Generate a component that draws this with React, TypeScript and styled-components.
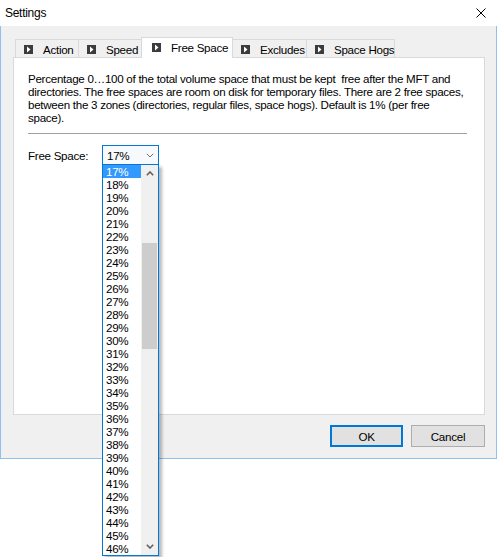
import React from 'react';
import styled, { createGlobalStyle } from 'styled-components';

const FONT = `"Liberation Sans", Arial, sans-serif`;
const FS = '11.6px';
const LS = '-0.28px';

const Global = createGlobalStyle`
  html, body { margin: 0; padding: 0; background: #ffffff; }
  html, body, #root { min-height: 557px; overflow: visible; }
  body { font-family: ${FONT}; font-size: ${FS}; letter-spacing: ${LS}; color: #000; }
`;

const Window = styled.div`
  position: relative;
  width: 497px;
  font-family: ${FONT};
  font-size: ${FS};
  letter-spacing: ${LS};
  color: #000;
`;

const TitleBar = styled.div`
  height: 26px;
  box-sizing: border-box;
  background: #ffffff;
  display: flex;
  align-items: center;
  justify-content: space-between;
  padding: 0 11px 0 5px;
`;

const Title = styled.span`
  font-size: 12px;
`;

const Client = styled.div`
  background: #f0f0f0;
  border: 1px solid #8dc1f2;
  border-top: none;
  padding: 11px 11px 11px 12px;
  display: flex;
  flex-direction: column;
`;

const TabStrip = styled.div`
  display: flex;
  align-items: flex-end;
  height: 20px;
  padding-left: 2px;
`;

const Tab = styled.div<{ $w: number; $active?: boolean }>`
  box-sizing: border-box;
  flex: none;
  width: ${(p) => p.$w}px;
  height: ${(p) => (p.$active ? 21 : 18)}px;
  margin-bottom: ${(p) => (p.$active ? -1 : 0)}px;
  margin-left: -1px;
  &:first-child { margin-left: 0; }
  position: relative;
  z-index: ${(p) => (p.$active ? 2 : 1)};
  background: ${(p) => (p.$active ? '#ffffff' : '#f0f0f0')};
  border: 1px solid #d9d9d9;
  border-bottom: none;
  display: flex;
  align-items: center;
  gap: 10px;
  padding-left: ${(p) => (p.$active ? 10 : 8)}px;
  padding-top: ${(p) => (p.$active ? 0 : 1)}px;
  padding-bottom: ${(p) => (p.$active ? 2 : 0)}px;
  white-space: nowrap;
  & > svg { flex: none; }
`;

const Panel = styled.div`
  box-sizing: border-box;
  height: 358px;
  background: #ffffff;
  border: 1px solid #d9d9d9;
  padding: 14px 17px 0 14px;
  display: flex;
  flex-direction: column;
`;

const Description = styled.div`
  line-height: 13px;
`;

const Line = styled.div`
  white-space: nowrap;
`;

const Separator = styled.div`
  height: 1px;
  background: #a0a0a0;
  margin-top: 9px;
`;

const FieldRow = styled.div`
  display: flex;
  align-items: center;
  margin-top: 11px;
  height: 20px;
`;

const FieldLabel = styled.span`
  width: 74px;
`;

const ComboWrap = styled.div`
  position: relative;
  width: 57px;
  height: 20px;
`;

const Combo = styled.div`
  box-sizing: border-box;
  width: 100%;
  height: 100%;
  border: 1px solid #0078d7;
  background: #f7fafd;
  display: flex;
  align-items: center;
  justify-content: space-between;
  padding: 0 4px 0 4px;
`;

const DropList = styled.div`
  position: absolute;
  left: 0;
  top: 19px;
  width: 57px;
  height: 392px;
  box-sizing: border-box;
  border: 1px solid #0078d7;
  background: #ffffff;
  display: flex;
  box-shadow: 3px 3px 3px rgba(0, 0, 0, 0.28);
  z-index: 10;
`;

const Items = styled.div`
  flex: 1;
  display: flex;
  flex-direction: column;
`;

const Item = styled.div<{ $sel?: boolean }>`
  flex: none;
  height: 13px;
  line-height: 13px;
  padding-left: 3px;
  background: ${(p) => (p.$sel ? '#3399ff' : 'transparent')};
  color: ${(p) => (p.$sel ? '#ffffff' : '#000000')};
`;

const ScrollBar = styled.div`
  width: 17px;
  background: #f0f0f0;
  display: flex;
  flex-direction: column;
  align-items: center;
`;

const ScrollArrow = styled.div`
  flex: none;
  height: 17px;
  width: 17px;
  display: flex;
  align-items: center;
  justify-content: center;
`;

const Track = styled.div`
  flex: 1;
  width: 100%;
  display: flex;
  flex-direction: column;
  align-items: center;
`;

const Thumb = styled.div`
  width: 15px;
  height: 106px;
  margin-top: 61px;
  background: #cdcdcd;
`;

const ButtonRow = styled.div`
  display: flex;
  justify-content: flex-end;
  gap: 8px;
  margin-top: 10px;
`;

const Button = styled.button<{ $default?: boolean; $w: number }>`
  box-sizing: border-box;
  width: ${(p) => p.$w}px;
  height: 22px;
  margin: 0;
  padding: 0;
  background: #e1e1e1;
  border: ${(p) => (p.$default ? '2px solid #0078d7' : '1px solid #adadad')};
  font-family: ${FONT};
  font-size: ${FS};
  letter-spacing: ${LS};
  color: #000;
`;

const TabIcon = () => (
  <svg width="9" height="9" viewBox="0 0 9 9">
    <rect x="0" y="0" width="9" height="9" fill="#3c3c3c" />
    <path d="M3 1.5 L6.5 4.5 L3 7.5 Z" fill="#ffffff" />
  </svg>
);

const Chevron = ({ up, color = '#606060', w = 1.6 }: { up?: boolean; color?: string; w?: number }) => (
  <svg width="8" height="5" viewBox="0 0 8 5">
    <path
      d={up ? 'M0.8 4.2 L4 1 L7.2 4.2' : 'M0.8 0.8 L4 4 L7.2 0.8'}
      fill="none"
      stroke={color}
      strokeWidth={w}
    />
  </svg>
);

const tabs = [
  { label: 'Action', w: 64 },
  { label: 'Speed', w: 64 },
  { label: 'Free Space', w: 92, active: true },
  { label: 'Excludes', w: 75 },
  { label: 'Space Hogs', w: 89 },
];

const values = Array.from({ length: 30 }, (_, i) => `${17 + i}%`);

export default function App() {
  return (
    <>
      <Global />
      <Window>
        <TitleBar>
          <Title>Settings</Title>
          <svg width="10" height="10" viewBox="0 0 10 10">
            <path d="M0.5 0.5 L9.5 9.5 M9.5 0.5 L0.5 9.5" stroke="#000" strokeWidth="1" />
          </svg>
        </TitleBar>
        <Client>
          <TabStrip>
            {tabs.map((t) => (
              <Tab key={t.label} $w={t.w} $active={t.active}>
                <TabIcon />
                <span>{t.label}</span>
              </Tab>
            ))}
          </TabStrip>
          <Panel>
            <Description>
              <Line>Percentage 0…100 of the total volume space that must be kept&nbsp; free after the MFT and</Line>
              <Line>directories. The free spaces are room on disk for temporary files. There are 2 free spaces,</Line>
              <Line>between the 3 zones (directories, regular files, space hogs). Default is 1% (per free</Line>
              <Line>space).</Line>
            </Description>
            <Separator />
            <FieldRow>
              <FieldLabel>Free Space:</FieldLabel>
              <ComboWrap>
                <Combo>
                  <span>17%</span>
                  <Chevron color="#707070" w={1} />
                </Combo>
                <DropList>
                  <Items>
                    {values.map((v, i) => (
                      <Item key={v} $sel={i === 0}>
                        {v}
                      </Item>
                    ))}
                  </Items>
                  <ScrollBar>
                    <ScrollArrow>
                      <Chevron up />
                    </ScrollArrow>
                    <Track>
                      <Thumb />
                    </Track>
                    <ScrollArrow>
                      <Chevron />
                    </ScrollArrow>
                  </ScrollBar>
                </DropList>
              </ComboWrap>
            </FieldRow>
          </Panel>
          <ButtonRow>
            <Button $default $w={73}>OK</Button>
            <Button $w={74}>Cancel</Button>
          </ButtonRow>
        </Client>
      </Window>
    </>
  );
}
